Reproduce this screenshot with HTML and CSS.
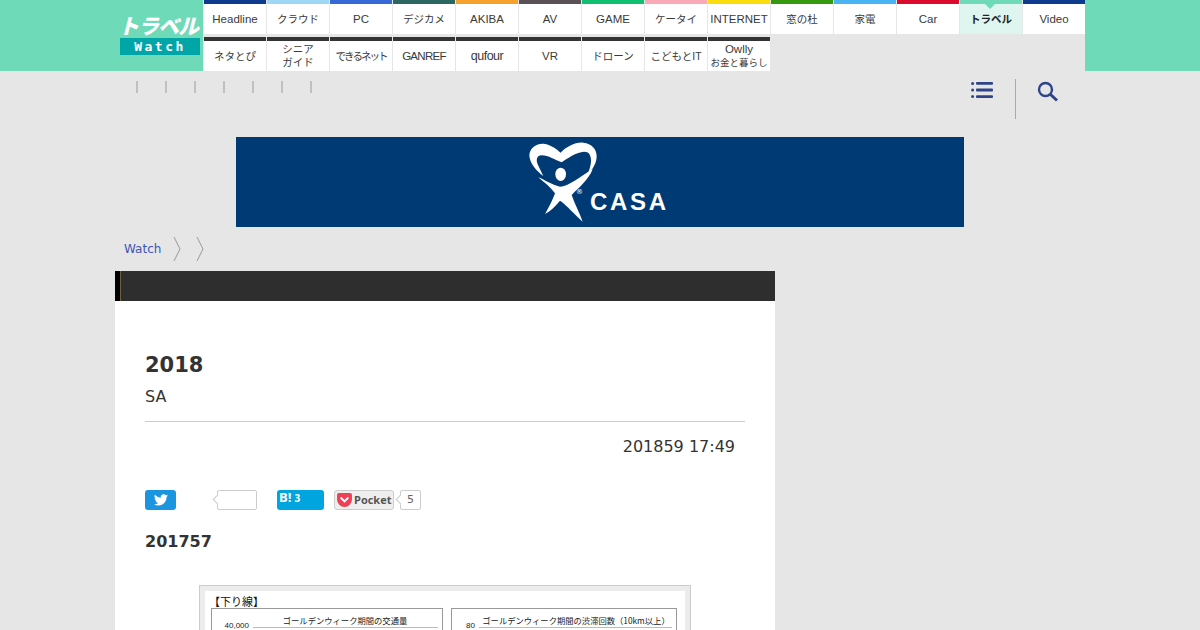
FILE: index.html
```html
<!DOCTYPE html>
<html lang="ja">
<head>
    <meta charset="UTF-8">
    <meta name="viewport" content="width=device-width, initial-scale=1.0">
    <title>トラベル Watch</title>
    <link rel="stylesheet" href="styles.css">
</head>
<body>
    <header class="site-head">
        <div class="head-inner">
            <a class="logo">
                <span class="logo-name">トラベル</span>
                <span class="logo-watch">Watch</span>
            </a>
            <nav class="tabs">
                <a class="tab c-navy">Headline</a>
                <a class="tab jp c-sky">クラウド</a>
                <a class="tab c-blue">PC</a>
                <a class="tab jp c-teal">デジカメ</a>
                <a class="tab c-orange">AKIBA</a>
                <a class="tab c-gray">AV</a>
                <a class="tab c-green">GAME</a>
                <a class="tab jp c-pink">ケータイ</a>
                <a class="tab c-yellow">INTERNET</a>
                <a class="tab jp c-leaf">窓の杜</a>
                <a class="tab jp c-cyan">家電</a>
                <a class="tab c-red">Car</a>
                <a class="tab jp tab-on">トラベル</a>
                <a class="tab c-navy">Video</a>
                <a class="tab jp c-dark">ネタとぴ</a>
                <a class="tab jp c-dark">シニア<br>ガイド</a>
                <a class="tab jp squeeze c-dark">できるネット</a>
                <a class="tab tight c-dark">GANREF</a>
                <a class="tab qufour c-dark">qufour</a>
                <a class="tab c-dark">VR</a>
                <a class="tab jp c-dark">ドローン</a>
                <a class="tab jp c-dark">こどもとIT</a>
                <a class="tab c-dark"><span>Owlly<br><span class="small">お金と暮らし</span></span></a>
            </nav>
        </div>
    </header>

    <div class="tools">
        <ul class="subnav">
            <li></li><li></li><li></li><li></li><li></li><li></li><li></li>
        </ul>
        <svg class="icon-menu" width="22" height="18" viewBox="0 0 22 18">
            <g fill="#2f4486">
                <circle cx="1.6" cy="2.4" r="1.5"/>
                <circle cx="1.6" cy="9" r="1.5"/>
                <circle cx="1.6" cy="15.6" r="1.5"/>
                <rect x="5" y="1" width="17" height="2.8" rx="1"/>
                <rect x="5" y="7.6" width="17" height="2.8" rx="1"/>
                <rect x="5" y="14.2" width="17" height="2.8" rx="1"/>
            </g>
        </svg>
        <div class="tool-line"></div>
        <svg class="icon-search" width="22" height="22" viewBox="0 0 22 22">
            <circle cx="8.5" cy="9.500" r="6.500" fill="none" stroke="#2f4486" stroke-width="2.400"/>
            <path d="M13 14L20 20.500" stroke="#2f4486" stroke-width="3" fill="none"/>
        </svg>
    </div>

    <div class="banner">
        <svg class="casa-mark" width="70" height="80" viewBox="87 36 210 240">
            <path fill="#fff" d="M88 75C90 50 115 38 135 42C155 46 170 58 182 68C200 50 225 36 250 38C275 40 290 58 290 78C290 100 278 118 262 135C272 110 278 90 268 72C258 58 230 65 185 97C165 90 145 76 125 76C110 76 107 90 114 105C120 118 125 128 130 138C112 125 88 100 88 75Z"/>
            <ellipse fill="#fff" cx="182" cy="133" rx="16" ry="20"/>
            <path fill="#fff" d="M115 142C135 150 155 165 180 170C205 170 240 140 278 118C265 150 235 175 215 195C225 225 240 250 248 275C225 255 200 225 180 212C165 230 150 245 135 252C148 230 160 205 165 190C150 170 130 155 115 142Z"/>
        </svg>
        <span class="casa-reg">®</span>
        <span class="casa-word">CASA</span>
    </div>

    <div class="crumbs">
        <a class="crumb-link">Watch</a>
        <svg class="crumb-arrow" width="8" height="24" viewBox="0 0 8 24"><path d="M1 0L7 12L1 24" fill="none" stroke="#999"/></svg>
        <svg class="crumb-arrow" width="8" height="24" viewBox="0 0 8 24"><path d="M1 0L7 12L1 24" fill="none" stroke="#999"/></svg>
    </div>

    <main class="article">
        <div class="article-bar"></div>
        <div class="article-body">
            <h1 class="title">2018</h1>
            <p class="subtitle">SA</p>
            <p class="date">201859 17:49</p>

            <div class="social">
                <a class="btn-tw">
                    <svg width="14" height="12" viewBox="0 0 24 20"><path fill="#fff" d="M24 2.400a9.800 9.800 0 0 1-2.800.8A5 5 0 0 0 23.300.5a9.800 9.800 0 0 1-3.100 1.200 4.900 4.900 0 0 0-8.400 4.500A14 14 0 0 1 1.700.9a4.900 4.900 0 0 0 1.500 6.600 4.900 4.900 0 0 1-2.200-.6c0 2.400 1.700 4.400 3.900 4.900a4.900 4.900 0 0 1-2.200.1 4.900 4.900 0 0 0 4.600 3.400A9.900 9.900 0 0 1 0 17.300 14 14 0 0 0 7.500 19.500c9.100 0 14.300-7.700 14-14.600A10 10 0 0 0 24 2.400z"/></svg>
                </a>
                <span class="count count-empty"></span>
                <a class="btn-hb"><b class="hb-mark">B!</b><b class="hb-num">3</b></a>
                <a class="btn-pocket">
                    <svg width="15" height="14" viewBox="0 0 16 15"><path fill="#ee4056" d="M2 0h12a2 2 0 0 1 2 2v5a8 8 0 0 1-16 0V2a2 2 0 0 1 2-2z"/><path d="M4.500 5.500L8 9l3.500-3.500" fill="none" stroke="#fff" stroke-width="2.200" stroke-linecap="round"/></svg>
                    <span>Pocket</span>
                </a>
                <span class="count count-pocket">5</span>
            </div>

            <p class="lead">201757</p>

            <figure class="chart">
                <div class="chart-inner">
                    <div class="chart-heading">【下り線】</div>
                    <div class="chart-panels">
                        <div class="panel panel-left">
                            <div class="panel-title">ゴールデンウィーク期間の交通量</div>
                            <div class="axis"><span class="axis-num">40,000</span><span class="axis-line"></span></div>
                        </div>
                        <div class="panel panel-right">
                            <div class="panel-title">ゴールデンウィーク期間の渋滞回数（10km以上）</div>
                            <div class="axis"><span class="axis-num">80</span><span class="axis-line"></span></div>
                        </div>
                    </div>
                </div>
            </figure>
        </div>
    </main>
</body>
</html>
```

FILE: styles.css
```css
body {
    margin: 0;
    height: 630px;
    overflow: hidden;
    background: #e6e6e6;
    font-family: "DejaVu Sans", "Noto Sans CJK JP", sans-serif;
    color: #333;
}

.site-head {
    height: 71px;
    background: #6fdab8;
}

.head-inner {
    width: 970px;
    height: 71px;
    margin: 0 auto;
    display: flex;
    background: #e6e6e6;
}

.logo {
    width: 88px;
    flex: none;
    background: #6fdab8;
    display: flex;
    flex-direction: column;
    align-items: flex-start;
    padding: 12px 0 0 5px;
    box-sizing: border-box;
}

.logo-name {
    width: 80px;
    height: 26px;
    margin-left: -2px;
    font: italic 900 21px/26px "Noto Sans CJK JP", sans-serif;
    letter-spacing: -1px;
    color: #fff;
    white-space: nowrap;
}

.logo-watch {
    width: 80px;
    height: 17px;
    background: #00a5a8;
    color: #fff;
    font: bold 13px/17px "DejaVu Sans Mono", monospace;
    letter-spacing: 2.500px;
    text-align: center;
}

.tabs {
    margin-left: 1px;
    display: grid;
    grid-template-columns: repeat(14, 62px);
    grid-template-rows: 34px 34px;
    column-gap: 1px;
    row-gap: 3px;
}

.tab {
    display: flex;
    align-items: center;
    justify-content: center;
    text-align: center;
    box-sizing: border-box;
    background: #fff;
    border-top: 4px solid #333;
    font: 11.5px/13px "Liberation Sans", "Noto Sans CJK JP", sans-serif;
    color: #3a3a3a;
    white-space: nowrap;
}

.jp { font-size: 10.5px; }
.tight { letter-spacing: -0.7px; }
.squeeze { letter-spacing: -2px; }
.qufour { font-size: 12.500px; letter-spacing: -0.5px; }
.small { font-size: 9.500px; }

.c-navy { border-top-color: #0d3a8c; }
.c-sky { border-top-color: #9ed8f5; }
.c-blue { border-top-color: #3668d8; }
.c-teal { border-top-color: #2c6660; }
.c-orange { border-top-color: #f7a12c; }
.c-gray { border-top-color: #5a5055; }
.c-green { border-top-color: #10c070; }
.c-pink { border-top-color: #f9a9b8; }
.c-yellow { border-top-color: #fbdc0c; }
.c-leaf { border-top-color: #359a10; }
.c-cyan { border-top-color: #48b4f4; }
.c-red { border-top-color: #dc0a2c; }
.c-dark { border-top-color: #333; }

.tab-on {
    position: relative;
    background: #def6ef;
    border-top-color: #6fdab8;
    font-weight: bold;
    color: #222;
}

.tab-on::before {
    content: "";
    position: absolute;
    top: 0;
    left: 25px;
    border: 5px solid transparent;
    border-bottom: 0;
    border-top-color: #6fdab8;
}

.tools {
    width: 970px;
    height: 66px;
    margin: 0 auto;
    display: flex;
    align-items: flex-start;
}

.subnav {
    list-style: none;
    margin: 10px 0 0;
    padding: 0 0 0 21px;
    display: flex;
    gap: 27px;
}

.subnav li {
    width: 2px;
    height: 12px;
    background: #c0c0c0;
}

.icon-menu {
    margin: 10px 0 0 auto;
}

.tool-line {
    width: 1px;
    height: 40px;
    margin: 8px 0 0 22px;
    background: #aaa;
}

.icon-search {
    margin: 9px 26px 0 21px;
}

.banner {
    width: 728px;
    height: 90px;
    margin: 0 auto;
    background: #003a75;
    display: flex;
    align-items: flex-start;
    padding-left: 293px;
    box-sizing: border-box;
}

.casa-mark {
    margin-top: 5px;
    flex: none;
}

.casa-reg {
    margin: 51px 0 0 -23px;
    width: 14px;
    font-size: 7px;
    line-height: 9px;
    color: #fff;
}

.casa-word {
    margin-top: 50px;
    font: bold 24px/30px "Liberation Sans", sans-serif;
    letter-spacing: 2.700px;
    color: #fff;
}

.crumbs {
    width: 970px;
    height: 44px;
    margin: 0 auto;
    padding-left: 9px;
    box-sizing: border-box;
    display: flex;
    align-items: center;
    font-size: 12px;
}

.crumb-link {
    color: #3d54b8;
    margin-right: 12px;
}

.crumb-arrow {
    margin-right: 15px;
}

.article {
    width: 660px;
    margin-left: 115px;
    background: #fff;
}

.article-bar {
    height: 30px;
    box-sizing: border-box;
    background: #2e2e2e;
    border-left: 5px solid #000;
    position: relative;
}

.article-bar::before {
    content: "";
    position: absolute;
    left: 0;
    top: 0;
    bottom: 0;
    width: 1px;
    background: #6f5f40;
}

.article-body {
    padding: 50px 30px 0;
}

.title {
    margin: 0;
    font-size: 21px;
    line-height: 28px;
}

.subtitle {
    margin: 7px 0 0;
    padding-bottom: 13px;
    border-bottom: 1px solid #ccc;
    font-size: 16px;
    line-height: 22px;
}

.date {
    margin: 14px 10px 0 0;
    text-align: right;
    font-size: 16px;
    line-height: 22px;
}

.social {
    margin-top: 32px;
    height: 20px;
    display: flex;
    align-items: center;
}

.btn-tw {
    width: 31px;
    height: 20px;
    border-radius: 3px;
    background: #1b95e0;
    display: flex;
    align-items: center;
    justify-content: center;
    margin-right: 41px;
}

.count {
    position: relative;
    box-sizing: border-box;
    height: 20px;
    background: #fff;
    border: 1px solid #ccc;
    border-radius: 2px;
    font-size: 11px;
    line-height: 18px;
    color: #666;
    text-align: center;
}

.count::before {
    content: "";
    position: absolute;
    left: -4px;
    top: 5px;
    width: 6px;
    height: 6px;
    background: #fff;
    border-left: 1px solid #ccc;
    border-bottom: 1px solid #ccc;
    transform: rotate(45deg);
}

.count-empty {
    width: 40px;
    margin-right: 20px;
}

.count-pocket {
    width: 21px;
    margin-left: 6px;
}

.btn-hb {
    width: 47px;
    height: 20px;
    border-radius: 3px;
    background: #00a4de;
    color: #fff;
    box-sizing: border-box;
    padding-left: 2px;
    margin-right: 10px;
    display: flex;
    align-items: flex-start;
    font-family: "Open Sans", sans-serif;
}

.hb-mark {
    font-size: 13px;
    line-height: 14px;
}

.hb-num {
    margin-left: 3px;
    margin-top: 2px;
    font-size: 10px;
    line-height: 12px;
}

.btn-pocket {
    width: 60px;
    height: 20px;
    box-sizing: border-box;
    border: 1px solid #ccc;
    border-radius: 3px;
    background: #eee;
    display: flex;
    align-items: center;
    padding-left: 2px;
    gap: 2px;
    font: bold 11px/18px "Open Sans", sans-serif;
    color: #555;
}

.lead {
    margin: 21px 0 0;
    font-size: 16px;
    font-weight: bold;
    line-height: 22px;
}

.chart {
    width: 492px;
    margin: 32px auto 0;
    box-sizing: border-box;
    padding: 5px 5px 0;
    height: 100px;
    background: #ececec;
    border: 1px solid #ccc;
    border-bottom: 0;
}

.chart-inner {
    height: 100%;
    background: #fff;
    padding: 4px 6px 0;
    box-sizing: border-box;
}

.chart-heading {
    font: 11px/13px "Noto Sans CJK JP", sans-serif;
    color: #111;
    margin-left: -2px;
}

.chart-panels {
    display: flex;
    gap: 8px;
}

.panel {
    height: 60px;
    box-sizing: border-box;
    border: 1px solid #999;
    padding-top: 5px;
}

.panel-left { width: 232px; }
.panel-right { width: 226px; }

.panel-title {
    font: 8.300px/12px "Noto Sans CJK JP", sans-serif;
    color: #222;
    text-align: center;
    white-space: nowrap;
}

.panel-left .panel-title { padding-left: 36px; }
.panel-right .panel-title { padding-left: 24px; }

.axis {
    display: flex;
    align-items: center;
    height: 10px;
    margin-top: -5px;
}

.axis-num {
    width: 37px;
    flex: none;
    font: 8px/10px "Liberation Sans", sans-serif;
    color: #222;
    text-align: right;
}

.panel-right .axis-num {
    width: 23px;
}

.axis-line {
    flex: 1;
    height: 1px;
    margin: 2px 4px 0;
    background: #bbb;
}
```
